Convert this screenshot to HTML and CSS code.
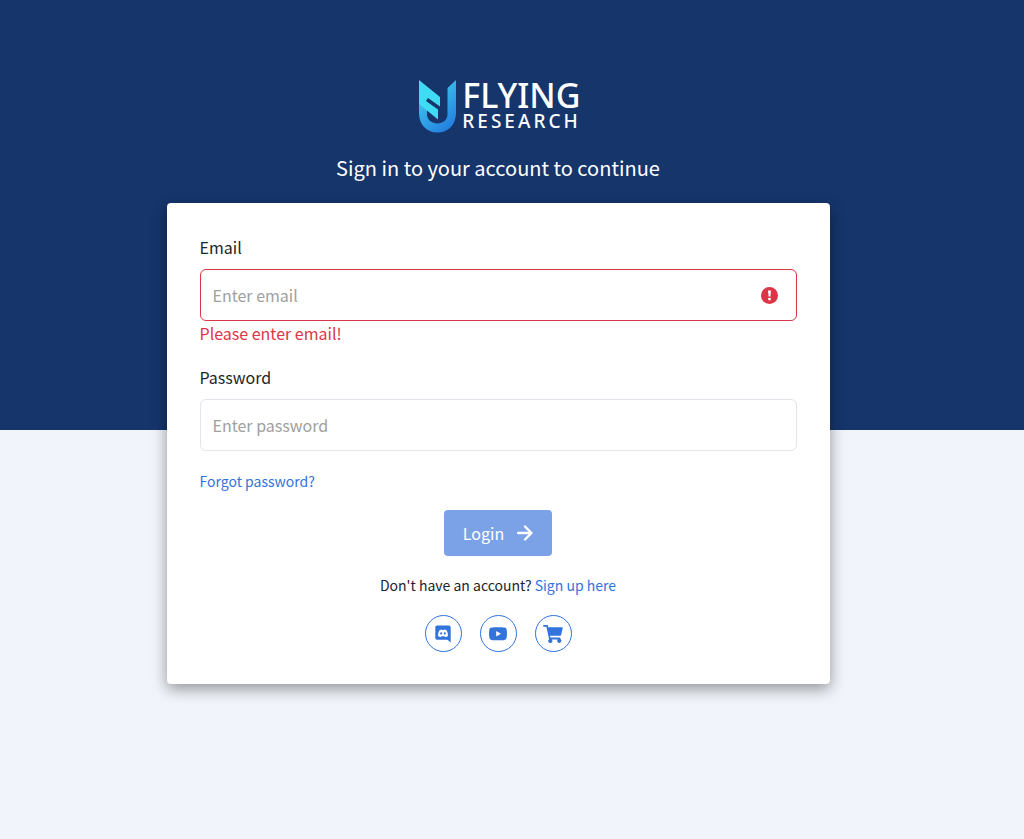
FILE: index.html
```html
<!DOCTYPE html>
<html lang="en">
<head>
  <meta charset="UTF-8" />
  <meta name="viewport" content="width=device-width, initial-scale=1.0" />
  <title>Flying Research - Login</title>
  <link rel="stylesheet" href="styles.css">
</head>
<body>
  <main class="page">
    <div class="logo">
      <svg class="logo-mark" viewBox="0 0 38 53" aria-hidden="true">
        <defs>
          <linearGradient id="hook" x1="0" y1="0" x2="0.6" y2="1">
            <stop offset="0" stop-color="#3fd5ee" />
            <stop offset="0.45" stop-color="#38b4ea" />
            <stop offset="1" stop-color="#2583e0" />
          </linearGradient>
        </defs>
        <path fill="url(#hook)" d="M0 19 L8 25 V34 C8 40 13 43.500 18.500 43.500 C24 43.500 28.500 40 28.500 34 V8 L37 0 V33 C37 45 29 52.500 18.500 52.500 C8 52.500 0 45 0 33 Z" />
        <path fill="#3fdcf3" d="M0 0 L21 17 V26.500 L9 18 L7 21 L19 29.500 V39.500 L0 24 Z" />
      </svg>
      <div class="logo-text">
        <span class="logo-name">FLYING</span>
        <span class="logo-sub">RESEARCH</span>
      </div>
    </div>
    <h1 class="lead">Sign in to your account to continue</h1>

    <div class="card">
      <form id="loginForm" novalidate>
        <div class="field">
          <label for="email">Email</label>
          <div class="control">
            <input class="invalid" type="email" id="email" placeholder="Enter email" aria-describedby="emailError" required>
            <svg class="error-icon" viewBox="0 0 16 16" aria-hidden="true">
              <circle cx="8" cy="8" r="8" fill="#dc3545" />
              <path d="M6.600 3.400h2.800l-.5 5.500H7.100z" fill="#fff" />
              <circle cx="8" cy="11.400" r="1.400" fill="#fff" />
            </svg>
          </div>
          <div class="error" id="emailError">Please enter email!</div>
        </div>
        <div class="field">
          <label for="password">Password</label>
          <input type="password" id="password" placeholder="Enter password" required>
        </div>
        <a class="forgot" href="#">Forgot password?</a>
        <button type="submit">
          Login
          <svg class="arrow" viewBox="0 0 16 16" aria-hidden="true">
            <path d="M1 8h13M8 1.500L14.500 8 8 14.500" fill="none" stroke="#fff" stroke-width="2.300" stroke-linecap="round" stroke-linejoin="round" />
          </svg>
        </button>
      </form>
      <p class="signup">Don't have an account? <a href="#">Sign up here</a></p>
      <nav class="social">
        <a href="#" aria-label="Discord">
          <svg viewBox="0 0 18 18">
            <path fill="#3273dc" fill-rule="evenodd" d="M3 .5h12a1.700 1.700 0 0 1 1.700 1.700V17.500l-3.200-2.700H3a1.700 1.700 0 0 1-1.700-1.700V2.200A1.700 1.700 0 0 1 3 .5zM4 10.800c.8 1 1.900 1.300 2.900 1.300l.6-.8h3l.6.8c1 0 2.100-.3 2.900-1.300 0-2-.5-3.900-1.300-5.400-.8-.6-1.700-.9-2.500-.9l-.4.600H8.200L7.800 4.500c-.8 0-1.700.3-2.500.9C4.500 6.900 4 8.800 4 10.800z" />
            <circle cx="7.200" cy="8.400" r="1.100" fill="#3273dc" />
            <circle cx="10.800" cy="8.400" r="1.100" fill="#3273dc" />
          </svg>
        </a>
        <a href="#" aria-label="YouTube">
          <svg viewBox="0 0 18 18">
            <path fill="#3273dc" fill-rule="evenodd" d="M2.500 2.500C5 2 13 2 15.500 2.500c1.200.2 1.900.9 2.100 2.100.5 2.700.5 5.500 0 8.200-.2 1.200-.9 1.900-2.100 2.100-2.500.5-10.500.5-13 0C1.300 14.700.6 14 .4 12.800c-.5-2.700-.5-5.500 0-8.200.2-1.200.9-1.900 2.100-2.100zM7.200 6v5.400L12 8.700z" />
          </svg>
        </a>
        <a href="#" aria-label="Shop">
          <svg class="cart" viewBox="0 0 20 18">
            <path fill="#3273dc" d="M.8 0h3.400c.4 0 .7.300.8.700L5.300 2.200h13.600c.6 0 .9.500.8 1l-1.600 6.900c-.1.400-.4.700-.8.700H7l.3 1.600h9.400c.5 0 .9.500.8 1l-.2.700a2 2 0 1 1-2.500.4H8.700a2 2 0 1 1-2.600-.2L3.400 1.700H.8C.4 1.700 0 1.300 0 .9 0 .4.400 0 .8 0z" />
          </svg>
        </a>
      </nav>
    </div>
  </main>
</body>
</html>
```
FILE: styles.css
```css
* {
  box-sizing: border-box;
}
body {
  margin: 0;
  min-height: 100vh;
  font-family: "Noto Sans CJK SC", "Noto Sans", sans-serif;
  font-size: 16px;
  line-height: 24px;
  color: #212529;
  background: #f1f5fb linear-gradient(#15356b, #15356b) no-repeat top / 100% 430px;
}
.page {
  display: flex;
  flex-direction: column;
  align-items: center;
  padding: 80px 28px 40px 0;
}
.logo {
  display: flex;
  gap: 5px;
  padding-left: 4px;
  color: #fff;
  font-family: "Noto Sans", "Open Sans", sans-serif;
  font-weight: 500;
}
.logo-mark {
  width: 38px;
  height: 53px;
}
.logo-text {
  display: flex;
  flex-direction: column;
}
.logo-name {
  font-size: 34px;
  line-height: 30px;
}
.logo-sub {
  font-size: 19px;
  line-height: 22px;
  letter-spacing: 3px;
}
.lead {
  margin: 19px 0;
  font-size: 20px;
  font-weight: 400;
  line-height: 32px;
  color: #fff;
}
.card {
  width: 100%;
  max-width: 663px;
  padding: 33px 33px 32px;
  background: #fff;
  border-radius: 4px;
  box-shadow: 0 5px 15px rgba(0, 0, 0, 0.4);
}
form {
  display: flex;
  flex-direction: column;
}
.field {
  margin-bottom: 21px;
}
label {
  display: block;
  margin-bottom: 11px;
  line-height: 22px;
}
.control {
  position: relative;
}
input {
  display: block;
  width: 100%;
  height: 52px;
  padding: 0 12px;
  font: inherit;
  color: #212529;
  background: #fff;
  border: 1px solid #e2e5ec;
  border-radius: 6px;
}
input::placeholder {
  color: #a0a0a0;
}
input.invalid {
  padding-right: 48px;
  border-color: #dc3545;
}
.error-icon {
  position: absolute;
  top: 18px;
  right: 19px;
  width: 17px;
  height: 17px;
}
.error {
  color: #dc3545;
}
a {
  color: #3273dc;
  text-decoration: none;
}
.forgot {
  align-self: flex-start;
  font-size: 14px;
  line-height: 18px;
}
button {
  display: flex;
  align-items: center;
  align-self: center;
  gap: 13px;
  height: 46px;
  margin: 20px 0;
  padding: 0 19px;
  font: inherit;
  color: #fff;
  background: #7ba2e7;
  border: none;
  border-radius: 4px;
}
.arrow {
  width: 16px;
  height: 16px;
}
.signup {
  margin: 0 0 21px;
  font-size: 14px;
  line-height: 18px;
  text-align: center;
}
.social {
  display: flex;
  justify-content: center;
  gap: 18px;
}
.social a {
  display: flex;
  align-items: center;
  justify-content: center;
  width: 37px;
  height: 37px;
  border: 1px solid #3273dc;
  border-radius: 50%;
}
.social svg {
  width: 18px;
  height: 18px;
}
.social .cart {
  width: 20px;
}
```
